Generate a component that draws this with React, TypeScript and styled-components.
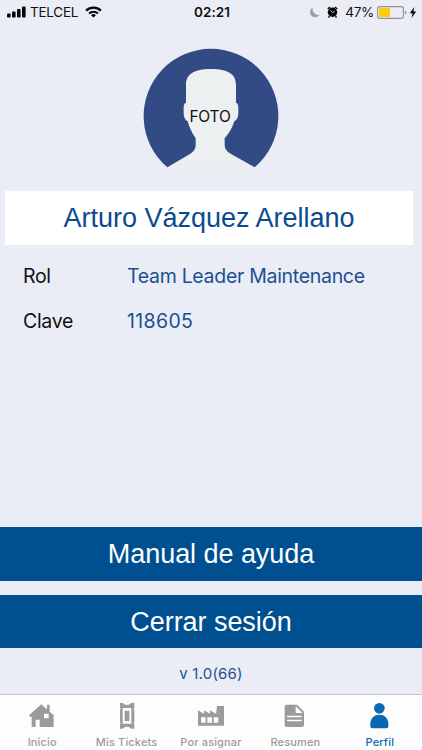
import React from "react";
import styled, { createGlobalStyle } from "styled-components";

const GlobalStyle = createGlobalStyle`
  * {
    box-sizing: border-box;
  }

  body {
    margin: 0;
    background-color: #eaedf5;
    font-family: Inter, "Liberation Sans", sans-serif;
  }
`;

const Screen = styled.div`
  display: flex;
  flex-direction: column;
  width: 422px;
  height: 750px;
  overflow: hidden;
  background-color: #eaedf5;
`;

const StatusBar = styled.header`
  display: grid;
  grid-template-columns: 1fr auto 1fr;
  align-items: center;
  height: 24px;
  padding: 0 5px 0 7px;
  color: #111;
  font-size: 13.5px;
  line-height: 24px;
`;

const StatusGroup = styled.div<{ end?: boolean }>`
  display: flex;
  align-items: center;
  justify-content: ${(props) => (props.end ? "flex-end" : "flex-start")};
`;

const Carrier = styled.span`
  margin: 0 7px 0 3px;
  letter-spacing: -0.25px;
`;

const Clock = styled.span`
  font-weight: 600;
  letter-spacing: 0.1px;
`;

const Percent = styled.span`
  margin: 0 3px 0 7px;
  letter-spacing: -0.3px;
`;

const AvatarFrame = styled.div`
  display: grid;
  justify-content: center;
  height: 167px;
  padding: 16px 2px 0 0;

  > * {
    grid-area: 1 / 1;
  }
`;

const AvatarLabel = styled.span`
  margin-top: 64px;
  color: #111;
  font-size: 15.5px;
  line-height: 25px;
  text-align: center;
  letter-spacing: -0.2px;
`;

const NameBanner = styled.h1`
  margin: 0 9px 0 5px;
  height: 54px;
  background-color: #fff;
  color: #0b4a8f;
  font-family: "Liberation Sans", Arial, sans-serif;
  font-size: 27px;
  font-weight: 400;
  line-height: 54px;
  text-align: center;
`;

const Details = styled.dl`
  display: grid;
  grid-template-columns: 104px 1fr;
  grid-auto-rows: 45px;
  align-items: center;
  margin: 8px 0 0;
  padding-left: 23px;
  font-size: 19.5px;
`;

const DetailLabel = styled.dt`
  color: #111;
  letter-spacing: -0.3px;
`;

const DetailValue = styled.dd<{ numeric?: boolean }>`
  margin: 0;
  color: #1d4f94;
  letter-spacing: ${(props) => (props.numeric ? "0.35px" : "-0.3px")};
`;

const Actions = styled.div`
  display: flex;
  flex-direction: column;
  gap: 14px;
  margin-top: auto;
`;

const ActionButton = styled.button`
  height: 53.5px;
  padding: 2px 0 0;
  border: 0;
  background-color: #004f91;
  color: #fff;
  font-family: "Liberation Sans", Arial, sans-serif;
  font-size: 27px;
  letter-spacing: -0.05px;
`;

const Version = styled.div`
  height: 46px;
  color: #1d4f94;
  font-size: 15px;
  line-height: 52px;
  text-align: center;
  letter-spacing: 0.2px;
`;

const TabBar = styled.nav`
  display: grid;
  grid-template-columns: repeat(5, 1fr);
  height: 56px;
  border-top: 1px solid #c3c4cb;
  background-color: #fdfdfe;
`;

const Tab = styled.a<{ active?: boolean }>`
  display: flex;
  flex-direction: column;
  align-items: center;
  padding-top: 6px;
  color: ${(props) => (props.active ? "#0868b3" : "#9b9b9b")};
  font-size: 11px;
  font-weight: 500;
  line-height: 18px;
  letter-spacing: 0.15px;
  white-space: nowrap;
`;

const TabIcon = styled.svg`
  width: 30px;
  height: 30px;
  margin-bottom: 2px;
  fill: currentColor;
`;

const SignalIcon = () => (
  <svg width="20" height="12" viewBox="0 0 20 12" fill="#050505">
    <rect x="0" y="7.5" width="3.6" height="4" rx="1" />
    <rect x="5" y="5.5" width="3.6" height="6" rx="1" />
    <rect x="10" y="3" width="3.6" height="8.5" rx="1" />
    <rect x="15" y="0.5" width="3.6" height="11" rx="1" />
  </svg>
);

const WifiIcon = () => (
  <svg width="17" height="12" viewBox="0 0 17 12" fill="none" stroke="#050505">
    <path d="M1.1 4.6a10.6 10.6 0 0 1 14.8 0" strokeWidth="2.2" />
    <path d="M4 7.5a6.5 6.5 0 0 1 9 0" strokeWidth="2" />
    <path d="M8.5 11.6l-2.4-2.4a3.5 3.5 0 0 1 4.8 0z" fill="#050505" stroke="none" />
  </svg>
);

const MoonIcon = () => (
  <svg width="11" height="11" viewBox="0 0 11 11">
    <path d="M3.8.5A5.2 5.2 0 1 0 10.8 7.6C7 9 2.6 5.4 3.8.5z" fill="#9c9ea5" />
  </svg>
);

const AlarmIcon = styled.svg`
  margin-left: 7px;
`;

const BatteryIcon = () => (
  <svg width="30" height="13" viewBox="0 0 30 13">
    <rect x="0.6" y="0.6" width="25.8" height="11.8" rx="2.2" fill="none" stroke="#92949a" strokeWidth="1.1" />
    <rect x="2" y="2" width="11" height="9" rx="0.6" fill="#ffcb05" />
    <path d="M27.8 4.5v4a2.1 2.1 0 0 0 0-4z" fill="#92949a" />
  </svg>
);

const BoltIcon = styled.svg`
  margin-left: 2px;
`;

const Avatar = () => (
  <svg width="160" height="140" viewBox="0 0 480 420">
    <defs>
      <linearGradient id="shoulders" gradientUnits="userSpaceOnUse" x1="0" y1="340" x2="0" y2="412">
        <stop offset="0" stopColor="#ecf0f0" />
        <stop offset="1" stopColor="#eaedf5" />
      </linearGradient>
    </defs>
    <path d="M112 382A202 202 0 1 1 374 382z" fill="#334b85" />
    <path
      d="M112 382L180 342Q197 332 197 315V295Q181 273 173 244Q161 238 161 220V202Q161 190 168 188V135C168 102 192 87 243 87C294 87 318 102 318 135V188Q325 190 325 202V220Q325 238 313 244Q304 273 284 295V315Q284 332 303 342L374 382V415H112z"
      fill="url(#shoulders)"
    />
  </svg>
);

const HomeIcon = () => (
  <TabIcon viewBox="0 0 90 90">
    <path
      fillRule="evenodd"
      d="M6 43L43 10L60 25V11H68V32L82 44L78 49H80V78H38V56H26V78H14V47L10 48zM51 38V52H65V38z"
    />
  </TabIcon>
);

const TicketIcon = () => (
  <TabIcon viewBox="0 0 90 90">
    <path
      fillRule="evenodd"
      d="M24 6H33Q36 12 45 12Q54 12 57 6H67V19Q64 23 67 28V62Q64 66 67 71V83H57Q54 77 45 77Q36 77 33 83H24V71Q27 66 24 62V28Q27 23 24 19zM32 21V68H58V21zM38 29H52V60H38z"
    />
  </TabIcon>
);

const FactoryIcon = () => (
  <TabIcon viewBox="0 0 90 90">
    <path
      fillRule="evenodd"
      d="M6 28L24 38V28L42 38V28L60 38L63 15H84V74H6zM15 49V65H29V49zM34 49V65H48V49zM53 49V65H67V49z"
    />
  </TabIcon>
);

const DocumentIcon = () => (
  <TabIcon viewBox="0 0 90 90">
    <path
      fillRule="evenodd"
      d="M20 11H51L72 32V71Q72 78 66 78H20Q14 78 14 71V17Q14 11 20 11zM47 15V36H68zM21 44V49H65V44zM21 56V61H65V56z"
    />
  </TabIcon>
);

const ProfileIcon = () => (
  <TabIcon viewBox="0 0 90 90">
    <circle cx="43" cy="22" r="16" />
    <path d="M16 76V68C16 51 28 41 43 41S70 51 70 68V76Q70 82 63 82H23Q16 82 16 76z" />
  </TabIcon>
);

const TABS = [
  { label: "Inicio", Icon: HomeIcon },
  { label: "Mis Tickets", Icon: TicketIcon },
  { label: "Por asignar", Icon: FactoryIcon },
  { label: "Resumen", Icon: DocumentIcon },
  { label: "Perfil", Icon: ProfileIcon },
];

const ACTIVE_TAB = "Perfil";

const App: React.FC = () => {
  return (
    <Screen>
      <GlobalStyle />
      <StatusBar>
        <StatusGroup>
          <SignalIcon />
          <Carrier>TELCEL</Carrier>
          <WifiIcon />
        </StatusGroup>
        <Clock>02:21</Clock>
        <StatusGroup end>
          <MoonIcon />
          <AlarmIcon width="11" height="12" viewBox="0 0 11 12">
            <circle cx="5.5" cy="6.3" r="4.7" fill="#050505" />
            <path d="M.8 3L3 1M10.2 3L8 1M2.5 10.2l-1 1.3M8.5 10.2l1 1.3" stroke="#050505" strokeWidth="1.5" />
            <path d="M3.4 4.2l2.1 2.3 2.3-.9" fill="none" stroke="#eaedf5" strokeWidth="0.8" />
          </AlarmIcon>
          <Percent>47%</Percent>
          <BatteryIcon />
          <BoltIcon width="8" height="11" viewBox="0 0 8 11">
            <path d="M5.2 0L.8 6.2h2.7L2.6 11 7.2 4.6H4.4z" fill="#050505" />
          </BoltIcon>
        </StatusGroup>
      </StatusBar>
      <AvatarFrame>
        <Avatar />
        <AvatarLabel>FOTO</AvatarLabel>
      </AvatarFrame>
      <NameBanner>Arturo Vázquez Arellano</NameBanner>
      <Details>
        <DetailLabel>Rol</DetailLabel>
        <DetailValue>Team Leader Maintenance</DetailValue>
        <DetailLabel>Clave</DetailLabel>
        <DetailValue numeric>118605</DetailValue>
      </Details>
      <Actions>
        <ActionButton>Manual de ayuda</ActionButton>
        <ActionButton>Cerrar sesión</ActionButton>
      </Actions>
      <Version>v 1.0(66)</Version>
      <TabBar>
        {TABS.map(({ label, Icon }) => (
          <Tab key={label} active={label === ACTIVE_TAB}>
            <Icon />
            {label}
          </Tab>
        ))}
      </TabBar>
    </Screen>
  );
};

export default App;
